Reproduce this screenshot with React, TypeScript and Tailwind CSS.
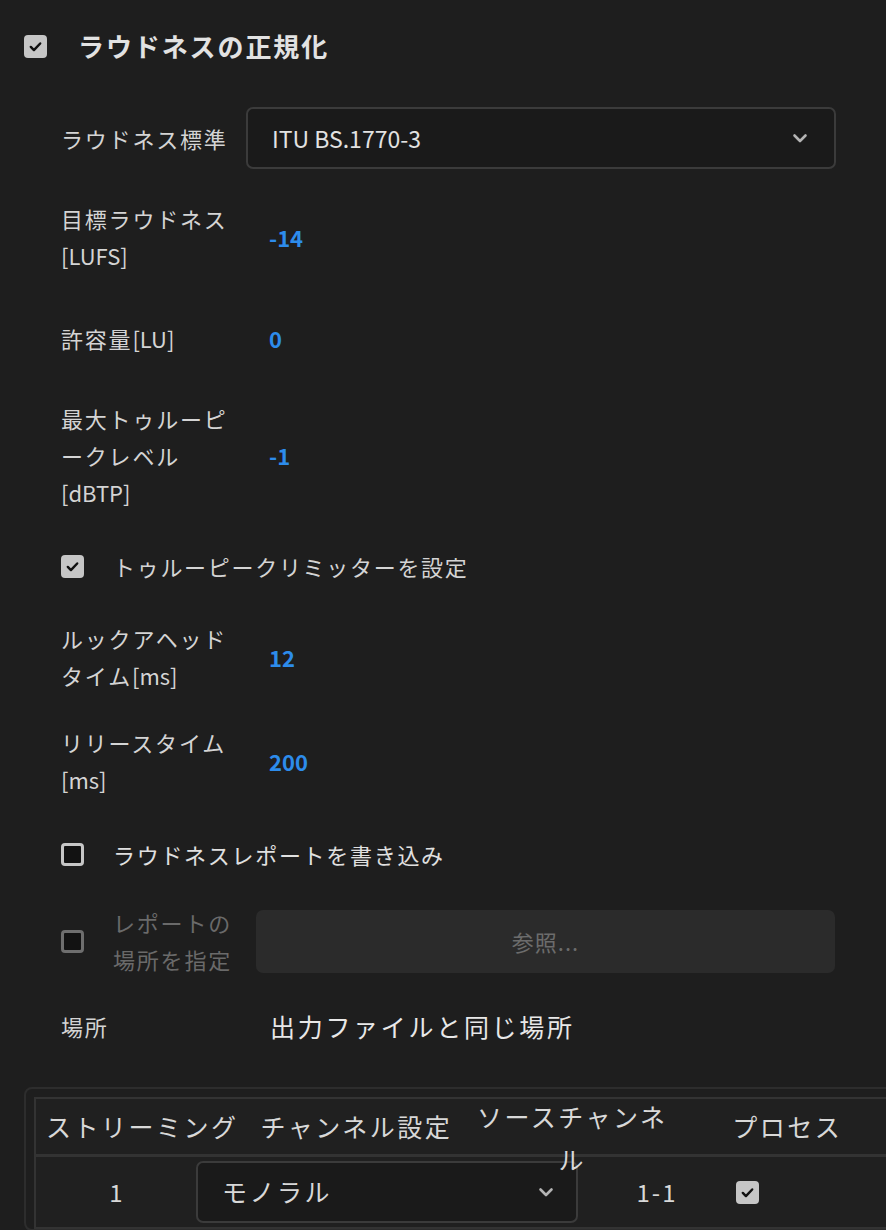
import React from "react";

const FONT = { fontFamily: '"Noto Sans CJK JP", "Noto Sans", sans-serif' };

function Check({ checked, disabled }: { checked?: boolean; disabled?: boolean }) {
  if (checked) {
    return (
      <div className="w-[23px] h-[23px] rounded-[4px] bg-[#c6c6c6] flex items-center justify-center shrink-0">
        <svg width="15" height="15" viewBox="0 0 16 16">
          <path d="M3 8.5l3.3 3.3L13 4.8" fill="none" stroke="#111" strokeWidth="2.6" strokeLinecap="round" strokeLinejoin="round" />
        </svg>
      </div>
    );
  }
  return (
    <div
      className={`w-[23px] h-[23px] rounded-[4px] border-[3px] bg-[#121212] shrink-0 ${
        disabled ? "border-[#6e6e6e]" : "border-[#c6c6c6]"
      }`}
    />
  );
}

function Chevron() {
  return (
    <svg width="20" height="20" viewBox="0 0 20 20">
      <path d="M4.5 7.5l5.5 5.5 5.5-5.5" fill="none" stroke="#b4b4b4" strokeWidth="2.6" strokeLinecap="round" strokeLinejoin="round" />
    </svg>
  );
}

// latin part of a label, no extra tracking
function L({ children }: { children: React.ReactNode }) {
  return <span className="tracking-normal">{children}</span>;
}

function Field({ label, value, className = "" }: { label: React.ReactNode; value: string; className?: string }) {
  return (
    <div className={`flex items-center ${className}`}>
      <div className="w-[269px] pl-[61px] shrink-0 text-[22px] tracking-[1.8px] leading-[37px] whitespace-nowrap text-[#d4d4d4]">
        {label}
      </div>
      <div className="text-[22px] font-bold text-[#2d8ceb]">{value}</div>
    </div>
  );
}

export default function App() {
  return (
    <div className="w-[886px] h-[1230px] overflow-hidden bg-[#1e1e1e] text-[#d4d4d4]" style={FONT}>
      <div className="flex items-center pl-[24px] pt-[34px]">
        <Check checked />
        <div className="ml-[31px] text-[26px] tracking-[1.9px] font-bold text-[#e2e2e2] leading-[24px] whitespace-nowrap">
          ラウドネスの正規化
        </div>
      </div>

      <div className="flex items-center mt-[49px]">
        <div className="w-[246px] pl-[61px] shrink-0 text-[22px] tracking-[1.8px] whitespace-nowrap text-[#d4d4d4]">ラウドネス標準</div>
        <div className="w-[590px] h-[62px] rounded-[7px] border-2 border-[#3b3b3b] bg-[#1a1a1a] flex items-center justify-between pl-[24px] pr-[24px]">
          <span className="text-[23px] text-[#e2e2e2]">ITU BS.1770-3</span>
          <Chevron />
        </div>
      </div>

      <Field className="mt-[31px]" label={<>目標ラウドネス<br /><L>[LUFS]</L></>} value="-14" />
      <Field className="mt-[46px]" label={<>許容量<L>[LU]</L></>} value="0" />
      <Field className="mt-[43px]" label={<>最大トゥルーピ<br />ークレベル<br /><L>[dBTP]</L></>} value="-1" />

      <div className="flex items-center pl-[61px] mt-[37px] h-[37px]">
        <Check checked />
        <div className="ml-[29px] text-[22px] tracking-[1.7px] whitespace-nowrap text-[#d4d4d4]">トゥルーピークリミッターを設定</div>
      </div>

      <Field className="mt-[35px]" label={<>ルックアヘッド<br />タイム<L>[ms]</L></>} value="12" />
      <Field className="mt-[30px]" label={<>リリースタイム<br /><L>[ms]</L></>} value="200" />

      <div className="flex items-center pl-[61px] mt-[38px] h-[37px]">
        <Check />
        <div className="ml-[29px] text-[22px] tracking-[1.7px] whitespace-nowrap text-[#e0e0e0]">ラウドネスレポートを書き込み</div>
      </div>

      <div className="flex items-center pl-[61px] mt-[31px]">
        <Check disabled />
        <div className="w-[143px] ml-[29px] shrink-0 text-[22px] tracking-[1.8px] leading-[37px] whitespace-nowrap text-[#6a6a6a]">
          レポートの<br />場所を指定
        </div>
        <div className="w-[579px] h-[63px] rounded-[7px] bg-[#2b2b2b] flex items-center justify-center text-[22px] tracking-[1px] text-[#6c6c6c]">
          参照...
        </div>
      </div>

      <div className="flex items-center mt-[30px] h-[37px]">
        <div className="w-[270px] pl-[61px] shrink-0 text-[22px] tracking-[1.8px] text-[#d4d4d4]">場所</div>
        <div className="text-[25px] tracking-[2.7px] whitespace-nowrap text-[#e8e8e8]">出力ファイルと同じ場所</div>
      </div>

      <div className="mt-[42px] ml-[24px] w-[900px] rounded-[8px] border-2 border-[#2d2d2d] pt-[8px] pl-[8px]">
        <div className="border-2 border-[#333333] bg-[#202020]">
          <div className="flex h-[58px] pl-[10px] border-b-[3px] border-[#333333] text-[25px] tracking-[2.5px] text-[#d8d8d8] whitespace-nowrap">
            <div className="flex items-center">ストリーミング</div>
            <div className="flex items-center ml-[22px]">チャンネル設定</div>
            <div className="relative w-[200px] ml-[20px] shrink-0">
              <div className="absolute left-0 top-[-4px] z-10 w-[200px] text-center leading-[43px] whitespace-normal">ソースチャンネル</div>
            </div>
            <div className="flex items-center ml-[60px]">プロセス</div>
          </div>
          <div className="flex items-center h-[70px] text-[24px] text-[#d8d8d8]">
            <div className="w-[160px] shrink-0 text-center">1</div>
            <div className="w-[382px] h-[62px] shrink-0 rounded-[7px] border-2 border-[#3b3b3b] bg-[#1a1a1a] flex items-center justify-between pl-[24px] pr-[20px]">
              <span className="text-[25px] tracking-[2.5px]">モノラル</span>
              <Chevron />
            </div>
            <div className="w-[158px] shrink-0 text-center tracking-[2px]">1-1</div>
            <Check checked />
          </div>
        </div>
      </div>
    </div>
  );
}
